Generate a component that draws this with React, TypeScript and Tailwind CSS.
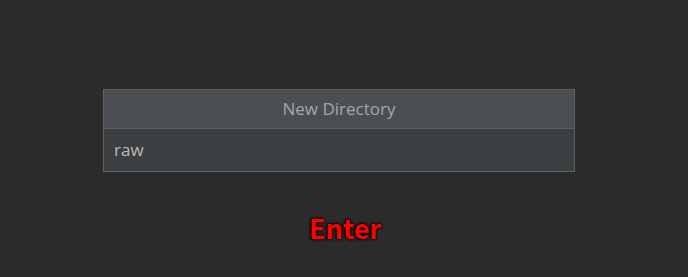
export default function App() {
  return (
    <div className="flex h-[277px] w-[688px] flex-col items-start bg-[#2b2b2b] font-['Open_Sans',sans-serif]">
      <div className="mt-[89px] ml-[103px] flex w-[472px] flex-col border border-[#5e6060]">
        <div className="flex h-[39px] items-center justify-center border-b border-[#5e6060] bg-[#4b4e52] text-[17px] text-[#a4a8ac]">
          New Directory
        </div>
        <div className="flex h-[42px] items-center bg-[#3c3f42] px-[10px] text-[17px] text-[#bbbbbb]">
          raw
        </div>
      </div>
      <div
        className="mt-[42px] self-center pl-[2px] text-[27px] font-bold leading-none text-[#ff0000] font-['Noto_Sans_CJK_JP',sans-serif]"
        style={{ textShadow: '0 0 3px #000, 0 0 3px #000, 0 0 2px #000' }}
      >
        Enter
      </div>
    </div>
  );
}
